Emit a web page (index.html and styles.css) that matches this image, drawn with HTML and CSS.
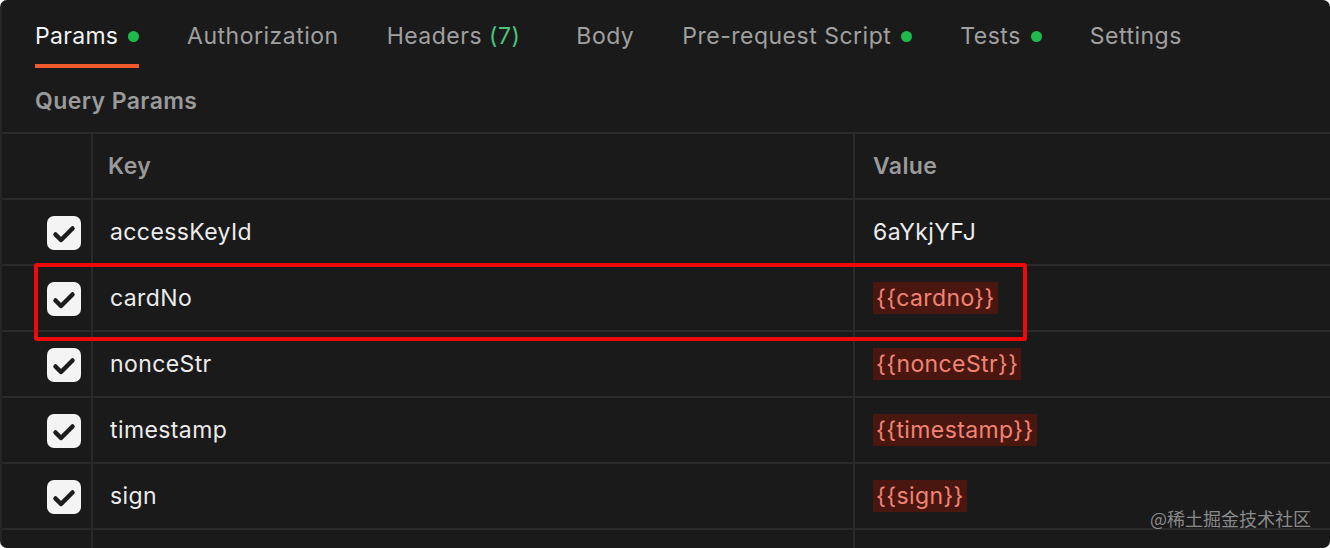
FILE: index.html
```html
<!DOCTYPE html>
<html lang="en">
<head>
<meta charset="utf-8">
<title>Params</title>
<link rel="stylesheet" href="styles.css">
</head>
<body>
<div class="panel">
  <nav class="tabs">
    <div class="tab active">Params <span class="dot"></span></div>
    <div class="tab">Authorization</div>
    <div class="tab headers">Headers <span class="count">(7)</span></div>
    <div class="tab">Body</div>
    <div class="tab">Pre-request Script <span class="dot"></span></div>
    <div class="tab">Tests <span class="dot"></span></div>
    <div class="tab">Settings</div>
  </nav>
  <div class="section-title">Query Params</div>
  <div class="table">
    <div class="row head">
      <div class="cell check"></div>
      <div class="cell key">Key</div>
      <div class="cell value">Value</div>
    </div>
    <div class="row">
      <div class="cell check"><span class="box"><svg viewBox="0 0 34 34"><path d="M8.5 18.5 L14 24 L25.5 12.5"/></svg></span></div>
      <div class="cell key">accessKeyId</div>
      <div class="cell value">6aYkjYFJ</div>
    </div>
    <div class="row">
      <div class="cell check"><span class="box"><svg viewBox="0 0 34 34"><path d="M8.5 18.5 L14 24 L25.5 12.5"/></svg></span></div>
      <div class="cell key">cardNo</div>
      <div class="cell value"><span class="var">{{cardno}}</span></div>
    </div>
    <div class="row">
      <div class="cell check"><span class="box"><svg viewBox="0 0 34 34"><path d="M8.5 18.5 L14 24 L25.5 12.5"/></svg></span></div>
      <div class="cell key">nonceStr</div>
      <div class="cell value"><span class="var">{{nonceStr}}</span></div>
    </div>
    <div class="row">
      <div class="cell check"><span class="box"><svg viewBox="0 0 34 34"><path d="M8.5 18.5 L14 24 L25.5 12.5"/></svg></span></div>
      <div class="cell key">timestamp</div>
      <div class="cell value"><span class="var">{{timestamp}}</span></div>
    </div>
    <div class="row">
      <div class="cell check"><span class="box"><svg viewBox="0 0 34 34"><path d="M8.5 18.5 L14 24 L25.5 12.5"/></svg></span></div>
      <div class="cell key">sign</div>
      <div class="cell value"><span class="var">{{sign}}</span></div>
    </div>
    <div class="row">
      <div class="cell check"></div>
      <div class="cell key"></div>
      <div class="cell value"></div>
    </div>
  </div>
  <div class="highlight"></div>
  <div class="watermark">@稀土掘金技术社区</div>
</div>
</body>
</html>
```

FILE: styles.css
```css
html {
  background: #ffffff;
}
body {
  margin: 0;
  font-family: Inter, "Noto Sans", "Noto Sans CJK SC", sans-serif;
}
.panel {
  position: relative;
  width: 1330px;
  height: 548px;
  overflow: hidden;
  background: #1a1a1a;
  border-radius: 7px;
  box-sizing: border-box;
  border-left: 2px solid #262626;
}
.tabs {
  display: flex;
  align-items: flex-start;
  padding: 0 0 0 32px;
  height: 68px;
}
.tab {
  font-size: 23px;
  color: #a0a0a0;
  margin-right: 48px;
  padding-top: 23px;
  height: 49px;
  box-sizing: border-box;
  display: flex;
  align-items: center;
  align-self: flex-start;
  white-space: pre;
  line-height: 28px;
  letter-spacing: 0.5px;
}
.tab.active {
  color: #f2f2f2;
  border-bottom: 4px solid #f0592b;
  height: 68px;
  padding-top: 22px;
  padding-bottom: 0;
  align-items: flex-start;
  margin-left: 1px;
  letter-spacing: 0.3px;
}
.tab.headers {
  margin-right: 56px;
}
.count {
  color: #4cc27a;
}
.dot {
  display: inline-block;
  width: 11px;
  height: 11px;
  border-radius: 50%;
  background: #1fb94e;
  margin-left: 3px;
  margin-top: 1px;
}
.tab.active .dot {
  margin-top: 9px;
}
.section-title {
  padding: 19px 0 0 33px;
  height: 64px;
  box-sizing: border-box;
  font-size: 23px;
  font-weight: 600;
  color: #9a9a9a;
  line-height: 28px;
  letter-spacing: 0.4px;
}
.table {
  border-top: 2px solid #2a2a2a;
}
.row {
  display: grid;
  grid-template-columns: 89px 764px 1fr;
  height: 66px;
  border-bottom: 2px solid #2a2a2a;
  box-sizing: border-box;
}
.cell {
  display: flex;
  align-items: center;
  font-size: 23px;
  color: #ececec;
  letter-spacing: 0.4px;
}
.cell.key {
  border-left: 2px solid #2a2a2a;
  border-right: 2px solid #2a2a2a;
  padding-left: 17px;
}
.cell.value {
  padding-left: 18px;
}
.row.head .cell {
  font-weight: 600;
  color: #9a9a9a;
}
.row.head .cell.key {
  padding-left: 15px;
}
.cell.check {
  justify-content: flex-end;
  padding-right: 10px;
}
.box {
  display: block;
  width: 34px;
  height: 34px;
  border-radius: 7px;
  background: #f4f4f4;
  margin-top: 2px;
}
.box svg {
  display: block;
  width: 34px;
  height: 34px;
}
.box path {
  fill: none;
  stroke: #1c1c1c;
  stroke-width: 4.5;
  stroke-linecap: round;
  stroke-linejoin: round;
}
.var {
  background: #4a1710;
  color: #f08474;
  padding: 2px 3px;
  line-height: 28px;
}
.highlight {
  position: absolute;
  left: 32px;
  top: 263px;
  width: 993px;
  height: 78px;
  box-sizing: border-box;
  border: 4px solid #ee0a0a;
  border-radius: 3px;
}
.watermark {
  position: absolute;
  right: 19px;
  top: 506px;
  font-size: 18px;
  color: #8a8a8a;
  font-family: "Noto Sans CJK SC", sans-serif;
  line-height: 24px;
}
```
